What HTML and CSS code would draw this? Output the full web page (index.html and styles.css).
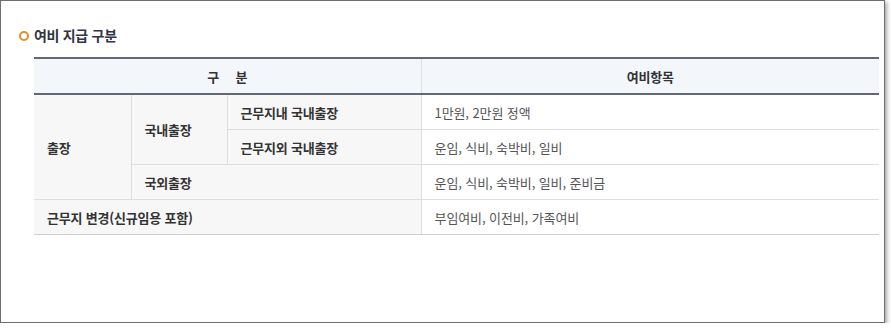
FILE: index.html
```html
<!DOCTYPE html>
<html lang="ko">
<head>
<meta charset="utf-8">
<title>여비 지급 구분</title>
<link rel="stylesheet" href="styles.css">
</head>
<body>
<div class="frame">
  <h2 class="title"><span class="ring"></span>여비 지급 구분</h2>
  <table class="grid">
    <colgroup>
      <col class="c1"><col class="c2"><col class="c3"><col class="c4">
    </colgroup>
    <thead>
      <tr>
        <th colspan="3" class="spaced">구 분</th>
        <th>여비항목</th>
      </tr>
    </thead>
    <tbody>
      <tr>
        <td rowspan="3" class="label">출장</td>
        <td rowspan="2" class="label">국내출장</td>
        <td class="label">근무지내 국내출장</td>
        <td class="value">1만원, 2만원 정액</td>
      </tr>
      <tr>
        <td class="label">근무지외 국내출장</td>
        <td class="value">운임, 식비, 숙박비, 일비</td>
      </tr>
      <tr>
        <td colspan="2" class="label">국외출장</td>
        <td class="value">운임, 식비, 숙박비, 일비, 준비금</td>
      </tr>
      <tr>
        <td colspan="3" class="label">근무지 변경(신규임용 포함)</td>
        <td class="value">부임여비, 이전비, 가족여비</td>
      </tr>
    </tbody>
  </table>
</div>
</body>
</html>
```

FILE: styles.css
```css
html, body {
  margin: 0;
  padding: 0;
  background: #ffffff;
}
body {
  font-family: "Noto Sans CJK KR", "Noto Sans", sans-serif;
  color: #333;
}
.frame {
  box-sizing: border-box;
  width: 885px;
  height: 323px;
  border: 1px solid #6e6e6e;
  box-shadow: 2px 2px 4px rgba(0, 0, 0, 0.35);
  padding: 24px 0 0 33px;
  background: #fff;
}
.title {
  display: flex;
  align-items: center;
  margin: 0 0 12px -15px;
  height: 20px;
  font-size: 14px;
  font-weight: 700;
  color: #2f3542;
  letter-spacing: -0.3px;
}
.ring {
  box-sizing: border-box;
  width: 10px;
  height: 10px;
  border: 2.5px solid #e58e2c;
  border-radius: 50%;
  margin: 1px 5px 0 0;
}
.grid {
  width: 845px;
  border-collapse: collapse;
  table-layout: fixed;
  font-size: 13px;
  letter-spacing: -0.2px;
}
.c1 { width: 97px; }
.c2 { width: 96px; }
.c3 { width: 194px; }
.c4 { width: 458px; }
.grid th {
  height: 34px;
  padding: 0;
  background: #f3f6fa;
  border-top: 2px solid #616876;
  border-bottom: 2px solid #616876;
  border-left: 1px solid #dde1e7;
  font-weight: 700;
  color: #333;
  text-align: center;
}
.grid th:first-child { border-left: none; }
.spaced { word-spacing: 13px; }
.grid td {
  height: 34px;
  padding: 0 0 0 13px;
  border: 1px solid #dedede;
  text-align: left;
}
.grid tr td:first-child { border-left: none; }
.grid td:last-child { border-right: none; }
.label {
  background: #f7f7f7;
  font-weight: 700;
  color: #333;
}
.value {
  background: #fff;
  color: #555;
  padding-left: 15px;
  letter-spacing: -0.1px;
}
.grid tbody tr:last-child td { border-bottom: 1px solid #cfcfcf; }
```
